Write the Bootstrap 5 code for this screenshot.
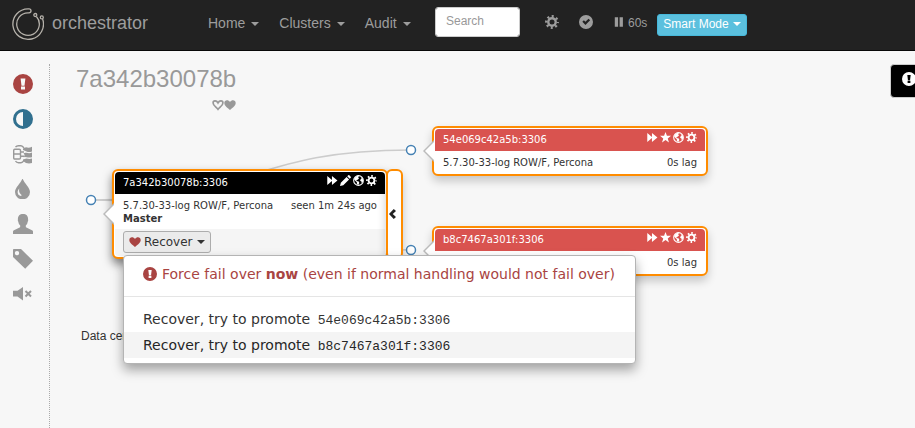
<!DOCTYPE html>
<html lang="en">
<head>
<meta charset="utf-8">
<meta name="viewport" content="width=device-width, initial-scale=1">
<title>orchestrator</title>
<link rel="stylesheet" href="https://cdn.jsdelivr.net/npm/bootstrap@5.3.0/dist/css/bootstrap.min.css">
<style>
body { background: #f7f7f7; color: #333; font: 14px/20px "Liberation Sans", Arial, sans-serif; }
svg.ico { width: 1em; height: 1em; fill: currentColor; flex: none; display: block; }
.dropdown-toggle::after { margin-left: 6px; vertical-align: middle; border-top: 4px solid; border-left: 4px solid transparent; border-right: 4px solid transparent; }

.topbar { background: #222; border-bottom: 1px solid #080808; height: 51px; padding: 0 12px 4px; color: #9d9d9d; }
.topbar a { color: #9d9d9d; text-decoration: none; white-space: nowrap; }
.brand { font-size: 18px; gap: 8px; width: 196px; }
.brand svg { width: 32px; height: 34px; margin-top: 2px; }
.menus { gap: 20px; width: 227px; }
.search-box { width: 85px; height: 30px; padding: 4px 10px 6px; font-size: 12px; border: 1px solid #ccc; border-radius: 3px; margin-right: 25px; margin-bottom: 2px; }
.search-box::placeholder { color: #999; }
.tools { gap: 20px; margin-right: 10px; }
.tools svg { margin-bottom: 2px; }
.countdown { font-size: 12px; gap: 3px; }
.smart-btn { height: 22px; padding: 0 5px; font-size: 12px; line-height: 18px; color: #fff; background: #5bc0de; border: 1px solid #46b8da; border-radius: 3px; margin-top: 3px; padding-bottom: 2px; }
.smart-btn::after { margin-left: 4px; }

.side { width: 50px; border-right: 1px dotted #aaa; margin-top: 13px; min-height: calc(100vh - 64px); padding: 2px 0 0 13px; font-size: 20px; }
.side a { height: 35px; color: #999; }
.side a.danger { color: #a94442; }
.side a.info { color: #31708f; }

.main-area { padding: 14px 0 0 26px; min-width: 0; }
.cluster-title { font-size: 24px; line-height: 28px; color: #999; margin: 0 0 6px; }
.hearts { font-size: 12px; color: #999; }
.alert-btn { height: 34px; padding: 0 11px; margin-right: -13px; margin-top: -1px; background: #000; border: 1px solid #ccc; border-radius: 4px; color: #fff; }
.alert-btn .ico { margin-top: -4px; }

.topology { height: 211px; margin-top: 4px; }
.topology .links { position: absolute; left: 0; top: 0; overflow: visible; }
.links path { fill: none; stroke: #ccc; stroke-width: 1.5; }
.links circle { fill: #fff; stroke: steelblue; stroke-width: 1.5; }
.instance { position: absolute; width: 276px; border: 2px solid #ff8c00; border-radius: 6px; padding: 1px; font: 10px/13px "DejaVu Sans", sans-serif; color: #333; box-shadow: 0 5px 10px rgba(0,0,0,.2); }
.instance.master { left: 36px; top: 54px; box-shadow: 0 5px 10px rgba(0,0,0,.5); }
.instance.replica-a { left: 356px; top: 11px; }
.instance.replica-b { left: 356px; top: 111px; }
.instance::before, .instance::after { content: ""; position: absolute; border: 10px solid transparent; border-left: 0; }
.instance::before { left: -11px; top: 12px; border-width: 11px 11px 11px 0; border-right-color: #bbb; }
.instance::after { left: -9px; top: 13px; border-right-color: #fff; }
.instance.master::before { top: 32px; }
.instance.master::after { top: 33px; }
.node-head { background: #d9534f; color: #fff; padding: 4px 8px 5px 8px; border-radius: 4px 4px 0 0; }
.master .node-head { background: #000; }
.node-icons { gap: 2px; margin-top: -4px; font-size: 11px; }
.node-text { padding: 5px 8px 4px; }
.node-foot { background: #f5f5f5; padding: 2px 8px 3px; border-radius: 0 0 4px 4px; }
.recover-btn { font: 12px/18px "DejaVu Sans", sans-serif; color: #333; background: #ebebeb; border: 1px solid #adadad; border-radius: 3px; padding: 1px 5px; gap: 3px; height: 22px; }
.recover-btn .ico { color: #a94442; }
.recover-btn::after { margin-left: 1px; }
.fold-btn { position: absolute; left: 310px; top: 54px; width: 17px; height: 90px; padding: 0; background: #fff; border: 2px solid #ff8c00; border-radius: 6px; color: #222; font-size: 10px; box-shadow: 0 5px 10px rgba(0,0,0,.2); }

.recover-menu { position: absolute; display: block; left: 47px; top: 140px; z-index: 10; padding: 5px 0; border: 1px solid #b4b4b4; border-radius: 4px; background: #fff; font: 14px/20px "DejaVu Sans", sans-serif; box-shadow: 0 6px 12px rgba(0,0,0,.35); }
.recover-menu .dropdown-item { padding: 3px 20px 3px 19px; color: #333; line-height: 20px; }
.recover-menu .dropdown-item.hovered { background: #f4f4f4; color: #262626; }
.recover-menu .dropdown-item.force { color: #a94442; gap: 5px; }
.recover-menu .dropdown-divider { margin: 9px 0; border-color: #e5e5e5; opacity: 1; }
.recover-menu code { font: 13px/13px "Liberation Mono", monospace; color: inherit; padding-left: 3px; }
.dc-label { font-size: 12px; padding-left: 5px; }
</style>
<script src="https://cdn.jsdelivr.net/npm/bootstrap@5.3.0/dist/js/bootstrap.bundle.min.js"></script>
</head>
<body>
<svg class="d-none" aria-hidden="true">
  <symbol id="i-excl" viewBox="0 0 20 20"><path fill-rule="evenodd" d="M10 0a10 10 0 1 0 0 20a10 10 0 0 0 0-20zM7.6 4.4h4.8l-.9 7.4h-3zM8 12.6h4v3H8z"/></symbol>
  <symbol id="i-contrast" viewBox="0 0 20 20"><path fill-rule="evenodd" d="M10 0a10 10 0 1 0 0 20a10 10 0 0 0 0-20zM10 3v14a7 7 0 0 1 0-14z"/></symbol>
  <symbol id="i-pool" viewBox="0 0 20 20"><path fill="none" stroke="currentColor" stroke-width="1.4" d="M1.800 5.200h4.400q1.300 0 1.300 1.300v7.200q0 1.300-1.300 1.300H1.800Q.7 15 .7 13.700V6.500q0-1.300 1.100-1.300zM.7 10h6.800M2.500 3.200Q3.500 1.700 5.500 1.700H8Q9.500 1.700 11 4M2.500 17q1 1.700 3 1.700h2.500q1.500 0 3-2.300M7.500 8H11M7.500 12.300H11"/><path d="M10 4.400L13 3.300q3 1 6-.6v4.800q-3 1-5.500 0L10 5.900zM10.500 9.300q1.500-.8 3-.5 3 .8 5.500-.2v4.600q-3 .8-5.500 0-1.500-.5-3 0 2-2 0-3.900zM10 15.500l3.500-1q3 .9 5.500 0v4.600q-3 .9-6 0l-3-2z"/></symbol>
  <symbol id="i-tint" viewBox="0 0 20 20"><path fill-rule="evenodd" d="M9.500-.9C8.500 3.600 2 8.200 2 13a7.500 7.300 0 0 0 15 0C17 8.200 10.500 3.600 9.500-.9zM6.400 9.500C5.300 12.500 7 14.600 8.300 15.800 9 16.500 8.200 17.200 7.200 16.800 3.900 15.500 4 11.500 6.400 9.500z"/></symbol>
  <symbol id="i-user" viewBox="0 0 20 20"><path d="M0 20v-2.500Q0 16.700 1 16.200L6.600 13.500Q7.200 13.200 7.200 12.400V11.600Q5.400 9.800 5.200 7.600 4.600 7 4.900 5.500C4.800 1.800 6.800 0 10 0s5.200 1.800 5.100 5.500q.3 1.500-.3 2.100-.2 2.200-2 4v.8q0 .8.600 1.100L19 16.200q1 .5 1 1.300V20z"/></symbol>
  <symbol id="i-tag" viewBox="0 0 20 20"><path fill-rule="evenodd" d="M0 .8Q0 0 .8 0H8l12 11.800-7.800 8L0 8zM4 1.900a2.200 2.200 0 1 0 0 4.400a2.200 2.200 0 0 0 0-4.400z"/></symbol>
  <symbol id="i-mute" viewBox="0 0 20 20"><path d="M0 6.800h4.500L10 3v13.500l-5.500-4H0z"/><path d="M12.500 7l5.500 5.500M18 7l-5.500 5.500" fill="none" stroke="currentColor" stroke-width="2"/></symbol>
  <symbol id="i-cog" viewBox="0 0 20 20"><circle cx="10" cy="10" r="5.300" fill="none" stroke="currentColor" stroke-width="3.400"/><circle cx="10" cy="10" r="8.200" fill="none" stroke="currentColor" stroke-width="3.400" stroke-dasharray="2.900 3.540" stroke-dashoffset="1.450"/></symbol>
  <symbol id="i-ok" viewBox="0 0 20 20"><path fill-rule="evenodd" d="M10 0a10 10 0 1 0 0 20a10 10 0 0 0 0-20zM4.800 9.800L7 7.600 9.200 9.800 13.600 5.300 15.900 7.600 9.200 14.300z"/></symbol>
  <symbol id="i-pause" viewBox="0 0 20 20"><path d="M3 2h5.500v16H3zM11 2h5.500v16H11z"/></symbol>
  <symbol id="i-heart" viewBox="0 0 20 20"><path d="M10 18.500C8 15.500.5 12 .5 6.500.5 1 7.500.5 10 5c2.500-4.500 9.500-4 9.500 1.500C19.500 12 12 15.500 10 18.500z"/></symbol>
  <symbol id="i-heart-o" viewBox="0 0 20 20"><path fill="none" stroke="currentColor" stroke-width="2.800" d="M10 17C8 14 1.800 11 1.800 6.500 1.800 2.500 7.500 1.800 10 6.500c2.500-4.700 8.200-4 8.200 0C18.200 11 12 14 10 17z"/></symbol>
  <symbol id="i-ff" viewBox="0 0 20 20"><path d="M.5 2L9 9V2l10 8-10 8v-7l-8.500 7z"/></symbol>
  <symbol id="i-star" viewBox="0 0 20 20"><path d="M10 0l2.600 7H20l-5.900 4.700L16.300 19 10 14.700 3.700 19l2.200-7.300L0 7h7.400z"/></symbol>
  <symbol id="i-globe" viewBox="0 0 20 20"><circle cx="10" cy="10" r="8.800" fill="none" stroke="currentColor" stroke-width="2"/><path d="M2 8l2-4 5-3 1.500 1.500-1 2.500 1.500 1-2.500 2.500-2 .5v2l4 1 1 2.500L9.500 18 7 16.500v-3.500L4 10.500zM14 3l4 4 .5 5-2.500 3-1-3.500-2-.5.500-3 2-1z"/></symbol>
  <symbol id="i-pencil" viewBox="0 0 20 20"><path d="M0 20l1.500-6L12 3.500 16.500 8 6 18.500zM13.200 2.300L15 .5q1-1 2 0L19.500 3q1 1 0 2l-1.800 1.800z"/></symbol>
  <symbol id="i-left" viewBox="0 0 20 20"><path d="M11.500 0L16 4 9.500 10 16 16l-4.500 4L2 10z"/></symbol>
</svg>

<nav class="topbar d-flex align-items-center" aria-label="Main">
  <a href="#" class="brand d-flex align-items-center">
    <svg viewBox="0 0 32 34" fill="none" stroke="#b5b1aa" stroke-width="1.300" aria-hidden="true">
      <path d="M30.600 12A15.300 15.300 0 1 1 16 1.800H17A2 2 0 0 1 17 5.800H16A11.300 11.300 0 1 0 24.400 9.500"/>
      <circle cx="23.300" cy="8" r="1.500"/><circle cx="29.800" cy="10.400" r="1.500"/>
    </svg>
    <span>orchestrator</span>
  </a>
  <div class="menus d-flex">
    <a href="#" class="dropdown-toggle">Home</a>
    <a href="#" class="dropdown-toggle">Clusters</a>
    <a href="#" class="dropdown-toggle">Audit</a>
  </div>
  <input type="search" class="search-box form-control" placeholder="Search" aria-label="Search">
  <div class="tools d-flex align-items-center">
    <a href="#" aria-label="Settings"><svg class="ico"><use href="#i-cog"/></svg></a>
    <a href="#" aria-label="Status"><svg class="ico"><use href="#i-ok"/></svg></a>
    <a href="#" class="countdown d-flex align-items-center"><svg class="ico"><use href="#i-pause"/></svg>60s</a>
  </div>
  <button type="button" class="smart-btn dropdown-toggle">Smart Mode</button>
</nav>

<div class="d-flex overflow-hidden">
  <aside class="side flex-shrink-0">
    <a href="#" class="danger d-flex align-items-center" aria-label="Problems"><svg class="ico"><use href="#i-excl"/></svg></a>
    <a href="#" class="info d-flex align-items-center" aria-label="Contrast"><svg class="ico"><use href="#i-contrast"/></svg></a>
    <a href="#" class="d-flex align-items-center" aria-label="Pools"><svg class="ico"><use href="#i-pool"/></svg></a>
    <a href="#" class="d-flex align-items-center" aria-label="Colorize"><svg class="ico overflow-visible"><use href="#i-tint"/></svg></a>
    <a href="#" class="d-flex align-items-center" aria-label="Anonymize"><svg class="ico"><use href="#i-user"/></svg></a>
    <a href="#" class="d-flex align-items-center" aria-label="Alias"><svg class="ico"><use href="#i-tag"/></svg></a>
    <a href="#" class="d-flex align-items-center" aria-label="Silent"><svg class="ico"><use href="#i-mute"/></svg></a>
  </aside>

  <main class="main-area flex-grow-1">
    <div class="d-flex justify-content-between align-items-start">
      <div>
        <h1 class="cluster-title fw-normal">7a342b30078b</h1>
        <div class="hearts d-flex justify-content-end"><svg class="ico"><use href="#i-heart-o"/></svg><svg class="ico"><use href="#i-heart"/></svg></div>
      </div>
      <button type="button" class="alert-btn" aria-label="Alerts"><svg class="ico"><use href="#i-excl"/></svg></button>
    </div>

    <div class="topology position-relative">
      <svg class="links" width="350" height="200" aria-hidden="true">
        <path d="M15 85C175 85 175 35 335 35"/>
        <path d="M15 85C175 85 175 135 335 135"/>
        <circle cx="15" cy="85" r="4.500"/><circle cx="335" cy="35" r="4.500"/><circle cx="335" cy="135" r="4.500"/>
      </svg>

      <div class="instance master card">
        <div class="node-head d-flex justify-content-between">
          <span>7a342b30078b:3306</span>
          <span class="node-icons d-flex align-items-center"><svg class="ico"><use href="#i-ff"/></svg><svg class="ico"><use href="#i-pencil"/></svg><svg class="ico"><use href="#i-globe"/></svg><svg class="ico"><use href="#i-cog"/></svg></span>
        </div>
        <div class="node-text d-flex justify-content-between">
          <div>5.7.30-33-log ROW/F, Percona<br><strong>Master</strong></div>
          <div>seen 1m 24s ago</div>
        </div>
        <div class="node-foot">
          <button type="button" class="recover-btn dropdown-toggle d-flex align-items-center" aria-expanded="true"><svg class="ico"><use href="#i-heart"/></svg>Recover</button>
        </div>
      </div>
      <button type="button" class="fold-btn d-flex align-items-center justify-content-start" aria-label="Fold"><svg class="ico"><use href="#i-left"/></svg></button>

      <div class="instance replica-a card">
        <div class="node-head d-flex justify-content-between">
          <span>54e069c42a5b:3306</span>
          <span class="node-icons d-flex align-items-center"><svg class="ico"><use href="#i-ff"/></svg><svg class="ico"><use href="#i-star"/></svg><svg class="ico"><use href="#i-globe"/></svg><svg class="ico"><use href="#i-cog"/></svg></span>
        </div>
        <div class="node-text d-flex justify-content-between"><span>5.7.30-33-log ROW/F, Percona</span><span>0s lag</span></div>
      </div>

      <div class="instance replica-b card">
        <div class="node-head d-flex justify-content-between">
          <span>b8c7467a301f:3306</span>
          <span class="node-icons d-flex align-items-center"><svg class="ico"><use href="#i-ff"/></svg><svg class="ico"><use href="#i-star"/></svg><svg class="ico"><use href="#i-globe"/></svg><svg class="ico"><use href="#i-cog"/></svg></span>
        </div>
        <div class="node-text d-flex justify-content-end"><span>0s lag</span></div>
      </div>

      <ul class="recover-menu dropdown-menu">
        <li><a href="#" class="dropdown-item force d-flex align-items-center"><svg class="ico"><use href="#i-excl"/></svg><span>Force fail over <strong>now</strong> (even if normal handling would not fail over)</span></a></li>
        <li><hr class="dropdown-divider"></li>
        <li><a href="#" class="dropdown-item">Recover, try to promote <code>54e069c42a5b:3306</code></a></li>
        <li><a href="#" class="dropdown-item hovered">Recover, try to promote <code>b8c7467a301f:3306</code></a></li>
      </ul>
    </div>
    <div class="dc-label">Data center</div>
  </main>
</div>
</body>
</html>
